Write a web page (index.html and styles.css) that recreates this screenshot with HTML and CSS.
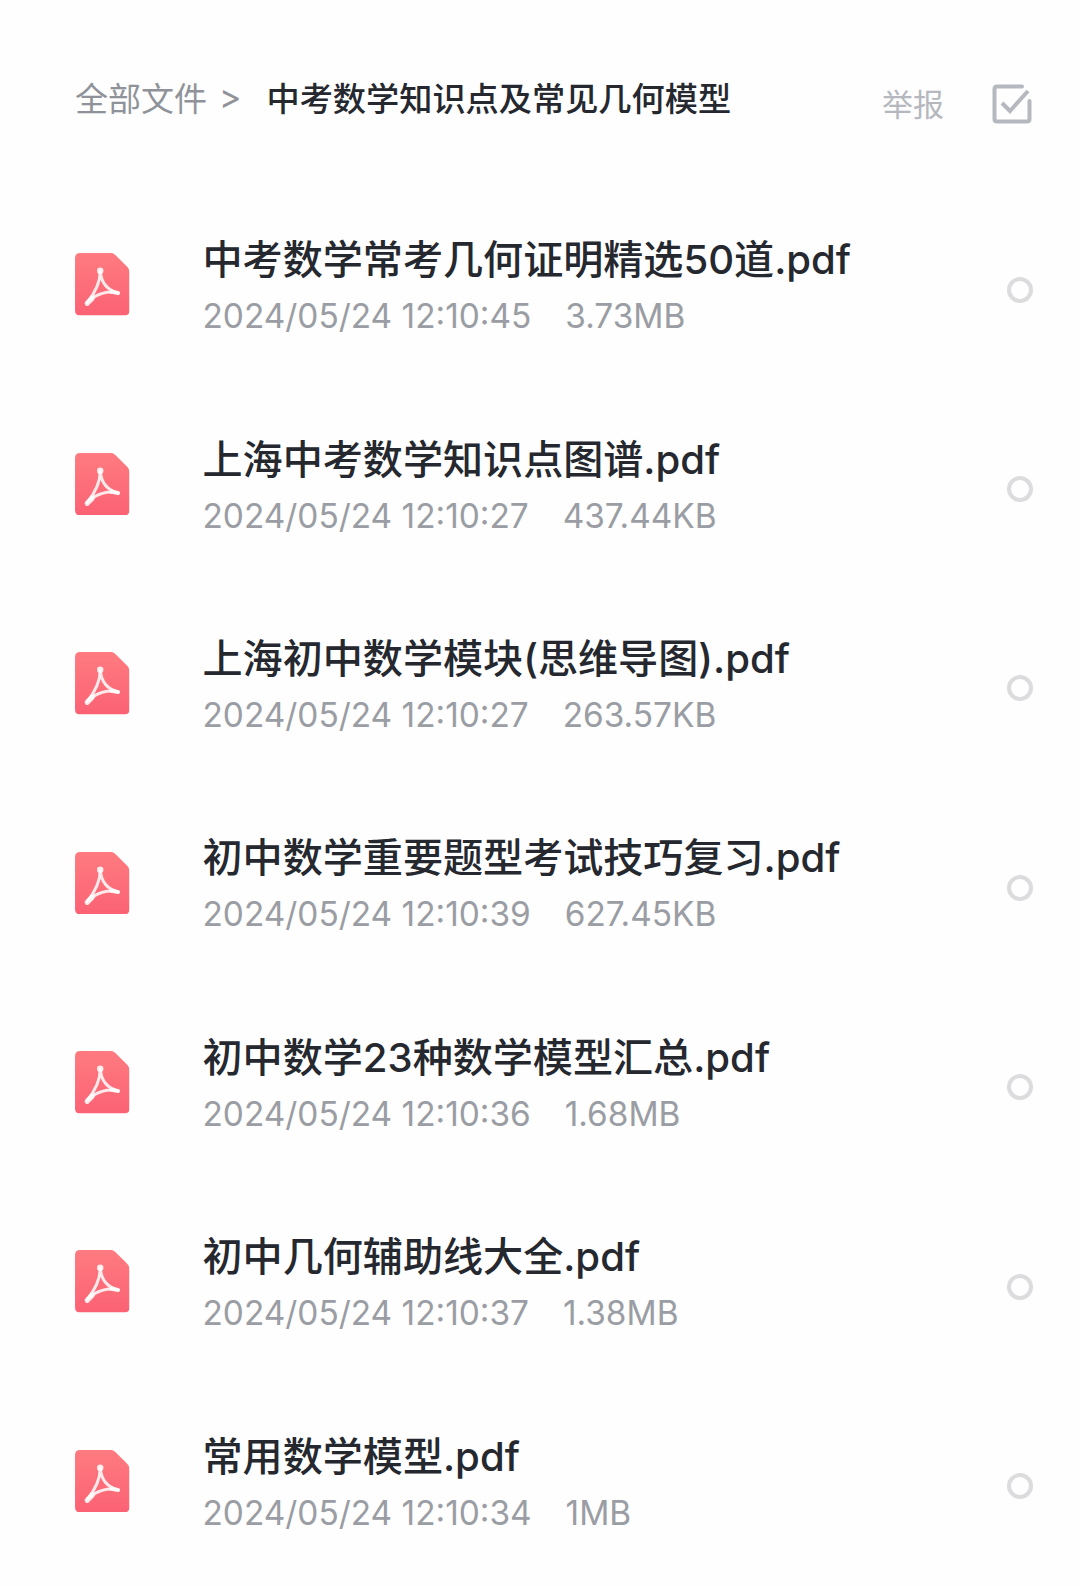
FILE: index.html
```html
<!DOCTYPE html>
<html lang="zh-CN">
<head>
    <meta charset="UTF-8">
    <meta name="viewport" content="width=device-width, initial-scale=1.0">
    <title>全部文件</title>
    <link rel="stylesheet" href="styles.css">
</head>
<body>
    <svg class="sprite" width="0" height="0">
        <symbol id="pdf" viewBox="0 0 54 62">
            <defs>
                <linearGradient id="pdf-fill" x1="0" y1="0" x2="0" y2="1">
                    <stop offset="0" stop-color="#fe7b80"/>
                    <stop offset="1" stop-color="#fb6274"/>
                </linearGradient>
            </defs>
            <path d="M5 0H36Q38 0 40 2L52 14Q54 16 54 19V57Q54 62 49 62H5Q0 62 0 57V5Q0 0 5 0Z" fill="url(#pdf-fill)"/>
            <path d="M25 18C25 27 21 38 12 49M25 18C26 29 32 37 43 39.500M14 47C21 41 32 37 43 39.500" fill="none" stroke="#fff" stroke-opacity=".85" stroke-width="3" stroke-linecap="round"/>
            <circle cx="25" cy="17.500" r="3.200" fill="#fff" fill-opacity=".85"/>
            <path d="M12 50L17 45" stroke="#fff" stroke-opacity=".85" stroke-width="5" stroke-linecap="round"/>
            <path d="M36 38.500L42.500 39.800" stroke="#fff" stroke-opacity=".85" stroke-width="4" stroke-linecap="round"/>
        </symbol>
    </svg>

    <div class="header">
        <div class="crumbs">
            <span class="crumb-root">全部文件</span>
            <span class="crumb-sep">&gt;</span>
            <span class="crumb-current">中考数学知识点及常见几何模型</span>
        </div>
        <span class="report">举报</span>
        <svg class="select-all" viewBox="0 0 40 40" width="40" height="40">
            <path d="M30 2.500H5Q2.500 2.500 2.500 5V35Q2.500 37.500 5 37.500H35Q37.500 37.500 37.500 35V17" fill="none" stroke="#b5b8be" stroke-width="4" stroke-linecap="round"/>
            <path d="M10 19L18 27L36 7" fill="none" stroke="#b5b8be" stroke-width="4"/>
        </svg>
    </div>

    <div class="file-list">
        <div class="file-row">
            <svg class="file-icon"><use href="#pdf"/></svg>
            <div class="file-info">
                <div class="file-name">中考数学常考几何证明精选50道.pdf</div>
                <div class="file-meta"><span>2024/05/24 12:10:45</span><span>3.73MB</span></div>
            </div>
            <span class="radio"></span>
        </div>
        <div class="file-row">
            <svg class="file-icon"><use href="#pdf"/></svg>
            <div class="file-info">
                <div class="file-name">上海中考数学知识点图谱.pdf</div>
                <div class="file-meta"><span>2024/05/24 12:10:27</span><span>437.44KB</span></div>
            </div>
            <span class="radio"></span>
        </div>
        <div class="file-row">
            <svg class="file-icon"><use href="#pdf"/></svg>
            <div class="file-info">
                <div class="file-name">上海初中数学模块(思维导图).pdf</div>
                <div class="file-meta"><span>2024/05/24 12:10:27</span><span>263.57KB</span></div>
            </div>
            <span class="radio"></span>
        </div>
        <div class="file-row">
            <svg class="file-icon"><use href="#pdf"/></svg>
            <div class="file-info">
                <div class="file-name">初中数学重要题型考试技巧复习.pdf</div>
                <div class="file-meta"><span>2024/05/24 12:10:39</span><span>627.45KB</span></div>
            </div>
            <span class="radio"></span>
        </div>
        <div class="file-row">
            <svg class="file-icon"><use href="#pdf"/></svg>
            <div class="file-info">
                <div class="file-name">初中数学23种数学模型汇总.pdf</div>
                <div class="file-meta"><span>2024/05/24 12:10:36</span><span>1.68MB</span></div>
            </div>
            <span class="radio"></span>
        </div>
        <div class="file-row">
            <svg class="file-icon"><use href="#pdf"/></svg>
            <div class="file-info">
                <div class="file-name">初中几何辅助线大全.pdf</div>
                <div class="file-meta"><span>2024/05/24 12:10:37</span><span>1.38MB</span></div>
            </div>
            <span class="radio"></span>
        </div>
        <div class="file-row">
            <svg class="file-icon"><use href="#pdf"/></svg>
            <div class="file-info">
                <div class="file-name">常用数学模型.pdf</div>
                <div class="file-meta"><span>2024/05/24 12:10:34</span><span>1MB</span></div>
            </div>
            <span class="radio"></span>
        </div>
    </div>
</body>
</html>
```

FILE: styles.css
```css
html, body { height: 100%; }
body {
    margin: 0;
    background-color: #fefefe;
    font-family: Inter, "Noto Sans CJK SC", sans-serif;
    overflow: hidden;
}
.sprite { position: absolute; }

.header {
    display: flex;
    align-items: center;
    height: 50px;
    padding: 79px 48px 0 75px;
}
.crumbs { display: flex; align-items: center; flex: 1; font-size: 33px; margin-top: -15px; }
.crumb-root { color: #8f9399; }
.crumb-sep { color: #8f9399; font-size: 34px; margin: 0 25px 0 12px; }
.crumb-current { color: #25282e; font-size: 33.200px; font-weight: 500; }
.report { color: #b5b8be; font-size: 31px; margin: -4px 48px 0 0; }
.select-all { flex: none; }

.file-list { padding-top: 56px; }
.file-row {
    display: flex;
    align-items: center;
    height: 199.400px;
    padding: 0 47px 0 75px;
}
.file-icon { flex: none; width: 54.500px; height: 62.500px; margin-right: 73px; }
.file-info { flex: 1; padding-top: 7px; }
.file-name { color: #25282e; font-size: 40.100px; font-weight: 500; line-height: 57px; }
.file-meta { display: flex; gap: 34px; color: #9a9da3; font-size: 33.400px; line-height: 57px; }
.radio {
    flex: none;
    width: 18px;
    height: 18px;
    margin-top: 10px;
    border: 4.500px solid #dcdcde;
    border-radius: 50%;
}
```
